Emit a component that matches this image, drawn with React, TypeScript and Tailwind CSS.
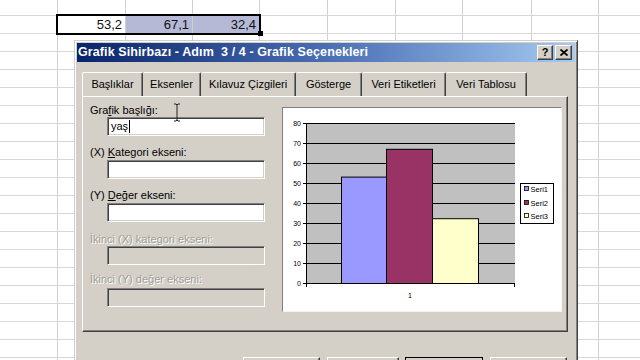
import React from "react";

const colW = [
  "w-[58px]",
  "w-[68px]",
  "w-[67px]",
  "w-[67px]",
  "w-[68px]",
  "w-[68px]",
  "w-[67px]",
  "w-[69px]",
  "w-[67px]",
  "w-[68px]",
];

const rows = Array.from({ length: 21 }, (_, i) => i);

const ui = "font-['Liberation_Sans',Arial,sans-serif]";

const sunken =
  "border border-t-[#808080] border-l-[#808080] border-r-white border-b-white shadow-[inset_1px_1px_0_#404040,inset_-1px_-1px_0_#d4d0c8]";

const raised =
  "border border-t-white border-l-white border-r-[#404040] border-b-[#404040] shadow-[inset_-1px_-1px_0_#808080]";

function Sheet() {
  return (
    <div className="flex flex-col">
      {rows.map((r) => (
        <div
          key={r}
          className={
            r === 0
              ? "flex h-[16px] border-b border-[#d8d8d8]"
              : "flex h-[18px] border-b border-[#d8d8d8]"
          }
        >
          {colW.map((w, c) => {
            let cls = `${w} shrink-0 border-r border-[#d0d0d0]`;
            let val = "";
            if (r === 1 && c === 1) val = "53,2";
            if (r === 1 && c === 2) {
              val = "67,1";
              cls += " bg-[#b6b9d6]";
            }
            if (r === 1 && c === 3) {
              val = "32,4";
              cls += " bg-[#b6b9d6]";
            }
            return (
              <div
                key={c}
                className={`${cls} flex items-end justify-end pr-[3px] text-[13px] leading-[16px] text-[#111] ${ui}`}
              >
                {val}
              </div>
            );
          })}
        </div>
      ))}
    </div>
  );
}

function Chart() {
  const grid = [0, 10, 20, 30, 40, 50, 60, 70, 80];
  const y = (v: number) => 175 - 2 * v;
  const bars = [
    { x: 58, w: 45, v: 53.2, fill: "#9999ff" },
    { x: 103, w: 46, v: 67.1, fill: "#993366" },
    { x: 149, w: 46, v: 32.4, fill: "#ffffcc" },
  ];
  const legend = [
    { name: "Seri1", fill: "#9999ff", yy: 81 },
    { name: "Seri2", fill: "#993366", yy: 95 },
    { name: "Seri3", fill: "#ffffcc", yy: 108 },
  ];
  return (
    <svg width="278" height="203" className="block">
      <rect x="23" y="15" width="209" height="160" fill="#c0c0c0" />
      {grid.map((v) => (
        <g key={v}>
          <line x1="23" x2="232" y1={y(v) + 0.5} y2={y(v) + 0.5} stroke="#000" strokeWidth="1" />
          <line x1="20" x2="23" y1={y(v) + 0.5} y2={y(v) + 0.5} stroke="#000" strokeWidth="1" />
          <text
            x="18"
            y={y(v) + 2.5}
            textAnchor="end"
            fontSize="7"
            fontFamily="Liberation Sans, Arial, sans-serif"
            fill="#000"
          >
            {v}
          </text>
        </g>
      ))}
      {bars.map((b) => (
        <rect
          key={b.x}
          x={b.x + 0.5}
          y={y(b.v) + 0.5}
          width={b.w}
          height={175 - y(b.v)}
          fill={b.fill}
          stroke="#000"
          strokeWidth="1"
        />
      ))}
      <line x1="23.5" x2="23.5" y1="15" y2="176" stroke="#000" />
      <line x1="23" x2="232" y1="175.5" y2="175.5" stroke="#000" />
      <line x1="23.5" x2="23.5" y1="175" y2="179" stroke="#000" />
      <line x1="231.5" x2="231.5" y1="175" y2="179" stroke="#000" />
      <text
        x="127"
        y="190"
        textAnchor="middle"
        fontSize="7"
        fontFamily="Liberation Sans, Arial, sans-serif"
        fill="#000"
      >
        1
      </text>
      <rect x="237.5" y="75.5" width="33" height="40" fill="#fff" stroke="#000" />
      {legend.map((l) => (
        <g key={l.name}>
          <rect x="241.5" y={l.yy - 2.5} width="4" height="4" fill={l.fill} stroke="#000" strokeWidth="0.8" />
          <text
            x="247.5"
            y={l.yy + 2.7}
            fontSize="7.5"
            fontFamily="Liberation Sans, Arial, sans-serif"
            fill="#000"
          >
            {l.name}
          </text>
        </g>
      ))}
    </svg>
  );
}

const tabs = [
  { label: "Başlıklar", w: "w-[61px]" },
  { label: "Eksenler", w: "w-[58px]" },
  { label: "Kılavuz Çizgileri", w: "w-[95px]" },
  { label: "Gösterge", w: "w-[66px]" },
  { label: "Veri Etiketleri", w: "w-[84px]" },
  { label: "Veri Tablosu", w: "w-[81px]" },
];

function Dialog() {
  return (
    <div
      className={`absolute left-[74px] top-[40px] h-[340px] w-[504px] bg-[#d4d0c8] p-[2px] ${ui} border border-t-[#d4d0c8] border-l-[#d4d0c8] border-r-[#404040] border-b-[#404040] shadow-[inset_1px_1px_0_#fff,inset_-1px_-1px_0_#808080]`}
    >
      {/* title bar */}
      <div className="flex h-[19px] items-center justify-between bg-linear-to-r from-[#0a246a] via-[#4a6eb4] to-[#a6caf0] pl-[1px] pr-[3px]">
        <span className="text-[12.5px] font-bold leading-none tracking-[0.1px] text-white">
          Grafik Sihirbazı - Adım&nbsp; 3 / 4 - Grafik Seçenekleri
        </span>
        <div className="flex gap-[2px]">
          <div className={`flex h-[15px] w-[16px] items-center justify-center bg-[#d4d0c8] ${raised}`}>
            <span className="text-[11px] font-bold leading-none text-black">?</span>
          </div>
          <div className={`flex h-[15px] w-[17px] items-center justify-center bg-[#d4d0c8] ${raised}`}>
            <svg width="8" height="7" viewBox="0 0 8 7">
              <path d="M0.5 0.5 L7.5 6.5 M7.5 0.5 L0.5 6.5" stroke="#000" strokeWidth="1.8" />
            </svg>
          </div>
        </div>
      </div>

      {/* tabs */}
      <div className="ml-[5px] mt-[10px] flex h-[24px]">
        {tabs.map((t, i) => (
          <div
            key={t.label}
            className={`${t.w} relative flex items-center justify-center rounded-t-[2px] border-t border-t-white border-r border-r-[#404040] shadow-[inset_-1px_0_0_#808080] text-[11px] text-black ${
              i === 0 ? "border-l border-l-white" : ""
            }`}
          >
            {t.label}
          </div>
        ))}
      </div>

      {/* panel */}
      <div className={`ml-[5px] flex h-[236px] w-[486px] ${raised}`}>
        <div className="relative flex w-[199px] flex-col pl-[7px] text-[11px] text-black">
          <div className="mt-[6px] leading-[14px]">
            Gra<span className="underline">f</span>ik başlığı:
          </div>
          <div className={`ml-[17px] flex h-[19px] w-[158px] items-center bg-white pl-[3px] ${sunken}`}>
            <span className="leading-none">yaş</span>
            <span className="ml-[1px] h-[13px] w-px bg-black" />
          </div>

          <div className="mt-[9px] leading-[14px]">
            (X) <span className="underline">K</span>ategori ekseni:
          </div>
          <div className={`ml-[17px] mt-[1px] h-[19px] w-[158px] bg-white ${sunken}`} />

          <div className="mt-[9px] leading-[14px]">
            (Y) <span className="underline">D</span>eğer ekseni:
          </div>
          <div className={`ml-[17px] mt-[1px] h-[19px] w-[158px] bg-white ${sunken}`} />

          <div className="mt-[11px] leading-[13px] text-[#a19e96] [text-shadow:1px_1px_0_#fff]">
            İkinci (X) kategori ekseni:
          </div>
          <div className={`ml-[17px] h-[19px] w-[158px] bg-[#d4d0c8] ${sunken}`} />

          <div className="mt-[7px] leading-[14px] text-[#a19e96] [text-shadow:1px_1px_0_#fff]">
            İkinci (Y) değer ekseni:
          </div>
          <div className={`ml-[17px] mt-[2px] h-[19px] w-[158px] bg-[#d4d0c8] ${sunken}`} />

          {/* mouse I-beam cursor */}
          <svg className="absolute left-[90px] top-[6px]" width="8" height="19" viewBox="0 0 8 19">
            <path d="M1 1 H3 L4 2 L5 1 H7 M4 2 V17 M1 18 H3 L4 17 L5 18 H7" stroke="#222" strokeWidth="1" fill="none" />
          </svg>
        </div>
        <div className="mt-[10px] h-[205px] w-[280px] border border-t-[#808080] border-l-[#808080] border-r-[#f4f4f4] border-b-[#f4f4f4] bg-white">
          <Chart />
        </div>
      </div>

      {/* buttons */}
      <div className="mt-[25px] flex">
        <div className={`ml-[166px] h-[23px] w-[77px] bg-[#d4d0c8] ${raised}`} />
        <div className={`ml-[7px] h-[23px] w-[72px] bg-[#d4d0c8] ${raised}`} />
        <div className="ml-[6px] h-[23px] w-[78px] border border-black bg-[#d4d0c8]" />
        <div className={`ml-[7px] h-[23px] w-[77px] bg-[#d4d0c8] ${raised}`} />
      </div>
    </div>
  );
}

export default function App() {
  return (
    <div className="relative h-[360px] w-[640px] overflow-hidden bg-white">
      <Sheet />
      {/* selection frame */}
      <div className="absolute left-[56px] top-[14px] h-[21px] w-[205px] border-2 border-black" />
      <div className="absolute left-[258px] top-[31px] h-[5px] w-[5px] bg-black" />
      <Dialog />
    </div>
  );
}
